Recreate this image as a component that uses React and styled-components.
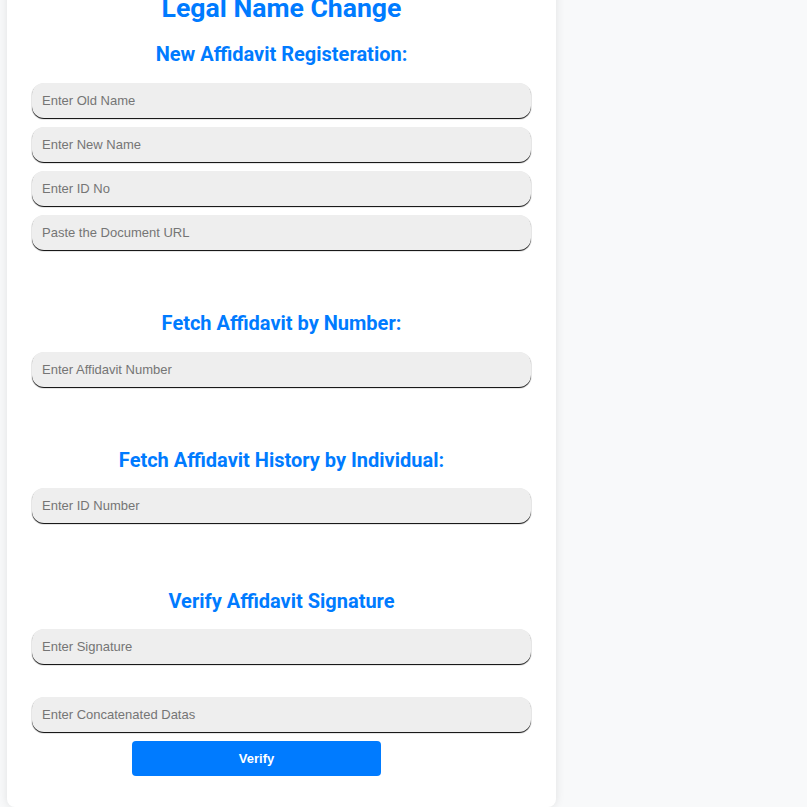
import React from "react";
import styled, { createGlobalStyle } from "styled-components";

const Global = createGlobalStyle`
  html, body { margin: 0; padding: 0; background: #f8f9fa; overflow: hidden; }
  * { box-sizing: border-box; }
`;

const Page = styled.div`
  display: flex;
  align-items: flex-start;
  padding-left: 7px;
  min-height: 100vh;
`;

const Card = styled.div`
  width: 549px;
  margin-top: -27px;
  background: #ffffff;
  border-radius: 8px;
  box-shadow: 0 0 10px rgba(0, 0, 0, 0.1);
  padding: 20px 25px 31px;
  display: flex;
  flex-direction: column;
`;

const Title = styled.h1`
  margin: 0 0 19px;
  font-family: Roboto, "Liberation Sans", sans-serif;
  font-weight: 700;
  font-size: 26.6px;
  line-height: 30px;
  color: #007bff;
  text-align: center;
`;

const Section = styled.section`
  display: flex;
  flex-direction: column;
  margin-bottom: ${(p) => p.$gap || 0}px;
`;

const Heading = styled.h2`
  margin: 0 0 ${(p) => p.$mb ?? 17}px;
  font-family: Roboto, "Liberation Sans", sans-serif;
  font-weight: 700;
  font-size: 20px;
  line-height: 24px;
  color: #007bff;
  text-align: center;
`;

const Input = styled.input`
  display: block;
  width: 100%;
  height: 35px;
  margin: 0 0 ${(p) => p.$mb ?? 9}px;
  padding: 0 10px;
  border: none;
  outline: none;
  border-radius: 12px;
  background: #eeeeee;
  box-shadow: 0 1px 1px #000;
  font-family: "Liberation Sans", Arial, sans-serif;
  font-size: 13px;
  color: #333;
  &::placeholder { color: #757575; }
`;

const Button = styled.button`
  width: 249px;
  height: 35px;
  margin-left: 100px;
  border: none;
  border-radius: 4px;
  background: #007bff;
  color: #fff;
  font-family: "Liberation Sans", Arial, sans-serif;
  font-weight: 700;
  font-size: 13px;
  cursor: pointer;
`;

export default function App() {
  return (
    <>
      <Global />
      <Page>
        <Card>
          <Title>Legal Name Change</Title>
          <Section $gap={52}>
            <Heading>New Affidavit Registeration:</Heading>
            <Input placeholder="Enter Old Name" />
            <Input placeholder="Enter New Name" />
            <Input placeholder="Enter ID No" />
            <Input placeholder="Paste the Document URL" />
          </Section>
          <Section $gap={52}>
            <Heading>Fetch Affidavit by Number:</Heading>
            <Input placeholder="Enter Affidavit Number" />
          </Section>
          <Section $gap={57}>
            <Heading $mb={16}>Fetch Affidavit History by Individual:</Heading>
            <Input placeholder="Enter ID Number" />
          </Section>
          <Section>
            <Heading $mb={16}>Verify Affidavit Signature</Heading>
            <Input placeholder="Enter Signature" $mb={33} />
            <Input placeholder="Enter Concatenated Datas" />
            <Button>Verify</Button>
          </Section>
        </Card>
      </Page>
    </>
  );
}
